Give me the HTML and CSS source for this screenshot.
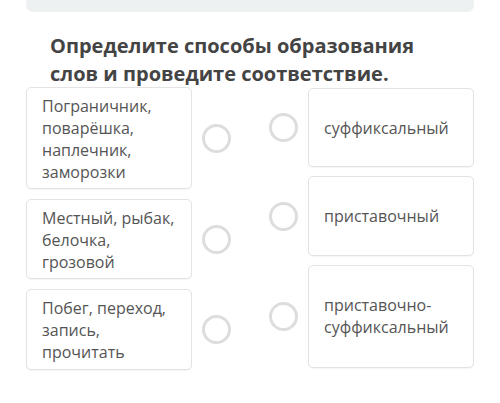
FILE: index.html
```html
<!DOCTYPE html>
<html lang="ru">
<head>
<meta charset="utf-8">
<link rel="stylesheet" href="styles.css">
</head>
<body>
<div class="topbar"></div>
<h1 class="title">Определите способы образования слов и проведите соответствие.</h1>
<div class="match">
  <div class="col col-left">
    <div class="row">
      <div class="card">Пограничник, поварёшка, наплечник, заморозки</div>
      <span class="dot"></span>
    </div>
    <div class="row">
      <div class="card">Местный, рыбак, белочка, грозовой</div>
      <span class="dot"></span>
    </div>
    <div class="row">
      <div class="card card-l3">Побег, переход, запись, прочитать</div>
      <span class="dot"></span>
    </div>
  </div>
  <div class="col col-right">
    <div class="row">
      <span class="dot"></span>
      <div class="card card-r card-r1">суффиксальный</div>
    </div>
    <div class="row">
      <span class="dot"></span>
      <div class="card card-r card-r2">приставочный</div>
    </div>
    <div class="row">
      <span class="dot"></span>
      <div class="card card-r card-r3">приставочно-<br>суффиксальный</div>
    </div>
  </div>
</div>
</body>
</html>
```
FILE: styles.css
```css
html, body {
  margin: 0;
  padding: 0;
  background: #ffffff;
}
body {
  width: 500px;
  height: 403px;
  overflow: hidden;
  font-family: "Open Sans", "Noto Sans", sans-serif;
}
.topbar {
  margin: 0 26px;
  height: 12px;
  background: #eef1f2;
  border-radius: 0 0 7px 7px;
}
.title {
  margin: 20px 0 0 50px;
  width: 380px;
  font-size: 20px;
  line-height: 28px;
  font-weight: 700;
  color: #444444;
}
.match {
  display: flex;
  gap: 38px;
  margin: -1px 0 0 26px;
}
.col {
  display: flex;
  flex-direction: column;
  gap: 10px;
}
.row {
  display: flex;
  align-items: center;
  gap: 10px;
}
.card {
  box-sizing: border-box;
  width: 166px;
  padding: 7px 12px 5px 15px;
  background: #ffffff;
  border: 1px solid #e3e3e3;
  border-radius: 5px;
  box-shadow: 0 1px 1px rgba(0,0,0,0.04);
  font-size: 16px;
  line-height: 22px;
  color: #555555;
}
.card-l3 {
  min-height: 81px;
}
.card-r {
  display: flex;
  align-items: center;
  padding: 6px 12px 6px 15px;
}
.card-r1 { min-height: 79px; }
.card-r2 { min-height: 80px; }
.card-r3 { min-height: 103px; padding-bottom: 8px; }
.col-right {
  margin-top: 1px;
  gap: 9px;
}
.dot {
  box-sizing: border-box;
  flex: none;
  width: 29px;
  height: 29px;
  border: 3px solid #dddddd;
  border-radius: 50%;
  background: #ffffff;
}
```
